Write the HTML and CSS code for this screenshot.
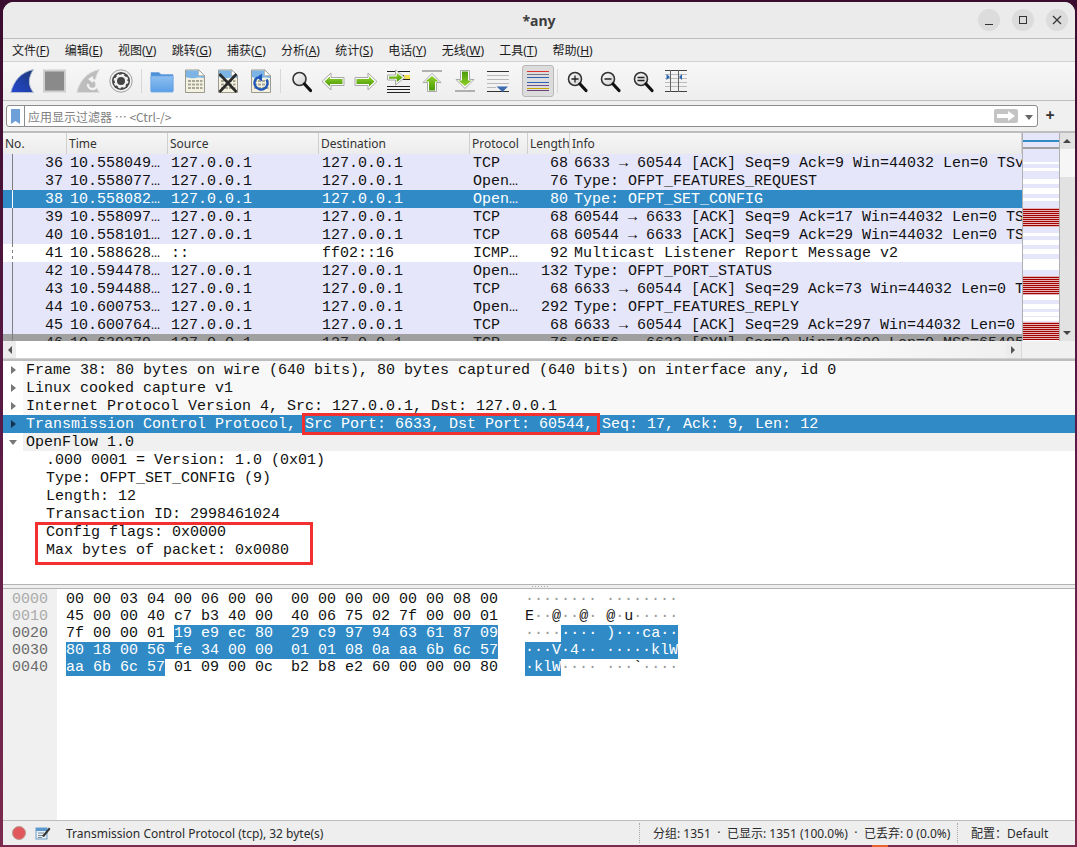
FILE: index.html
```html
<!DOCTYPE html>
<html lang="zh">
<head>
<meta charset="utf-8">
<title>*any</title>
<link rel="stylesheet" href="styles.css">
</head>
<body>
<svg class="defs" width="0" height="0" aria-hidden="true">
  <defs>
    <linearGradient id="blueFin" x1="0" y1="1" x2="1" y2="0"><stop offset="0" stop-color="#2446d0"/><stop offset=".6" stop-color="#1f3f9c"/><stop offset="1" stop-color="#1d3b70"/></linearGradient>
    <linearGradient id="green" x1="0" y1="0" x2="0" y2="1"><stop offset="0" stop-color="#8fd02a"/><stop offset="1" stop-color="#4a9a08"/></linearGradient>
    <linearGradient id="folder" x1="0" y1="0" x2="0" y2="1"><stop offset="0" stop-color="#8fc0f0"/><stop offset="1" stop-color="#5b9ee6"/></linearGradient>
    <linearGradient id="glass" x1="0" y1="0" x2="1" y2="1"><stop offset="0" stop-color="#fdfdfd"/><stop offset="1" stop-color="#cfcfcf"/></linearGradient>
    <pattern id="redStripe" width="4" height="2" patternUnits="userSpaceOnUse"><rect width="4" height="2" fill="#e6b4b4"/><rect width="4" height="1" fill="#a00000"/></pattern>
    <g id="arrowLeft">
      <path d="M1 12.500L10 4V8.500H23V16.500H10V21Z" fill="#fbfbfb" stroke="#a8a8a8"/>
      <path d="M3.500 12.500L9 7.500V10H21.500V15H9V17.500Z" fill="url(#green)"/>
    </g>
    <g id="arrowUp">
      <path d="M12 4.500L21 13.500H16.500V22.500H7.500V13.500H3Z" fill="#fbfbfb" stroke="#a8a8a8"/>
      <path d="M12 7L18.500 12.500H15V21.500H9V12.500H5.500Z" fill="url(#green)"/>
      <path d="M2 2H22" stroke="#9a9a9a" stroke-width="1.500"/>
    </g>
    <symbol id="page" viewBox="0 0 24 24">
      <path d="M2.500 1H16L21.500 6.500V23.500H2.500Z" fill="#f4f1e0" stroke="#9a9a8e"/>
      <path d="M3 1.500H15.500V7H21V9C15 7 9 11 3 8Z" fill="#7db4e6"/>
      <path d="M15.500 1V6.500H21.500Z" fill="#fff" stroke="#9a9a8e" stroke-width=".6"/>
      <g fill="#a8a898">
        <rect x="5" y="11" width="3" height="2"/><rect x="9" y="11" width="3" height="2"/><rect x="13" y="11" width="3" height="2"/><rect x="17" y="11" width="2.500" height="2"/>
        <rect x="5" y="14.500" width="3" height="2"/><rect x="9" y="14.500" width="3" height="2"/><rect x="13" y="14.500" width="3" height="2"/><rect x="17" y="14.500" width="2.500" height="2"/>
        <rect x="5" y="18" width="3" height="2"/><rect x="9" y="18" width="3" height="2"/><rect x="13" y="18" width="3" height="2"/><rect x="17" y="18" width="2.500" height="2"/>
      </g>
    </symbol>
    <g id="lens">
      <circle cx="10" cy="10" r="6.500" fill="url(#glass)" stroke="#333" stroke-width="1.600"/>
      <path d="M15 15L21 21.500" stroke="#111" stroke-width="3.200" stroke-linecap="round"/>
    </g>
  </defs>
</svg>

<div class="window">
  <header class="titlebar">
    <span class="title">*any</span>
    <div class="winctl">
      <button class="wbtn"><svg width="10" height="10" viewBox="0 0 10 10"><path d="M1 9.500H9" stroke="#333" stroke-width="1"/></svg></button>
      <button class="wbtn"><svg width="10" height="10" viewBox="0 0 10 10"><rect x="1.500" y="1.500" width="7" height="7" fill="none" stroke="#333" stroke-width="1"/></svg></button>
      <button class="wbtn"><svg width="10" height="10" viewBox="0 0 10 10"><path d="M1 1L9 9M9 1L1 9" stroke="#333" stroke-width="1.200"/></svg></button>
    </div>
  </header>

  <nav class="menubar">
    <span>文件(<u>F</u>)</span><span>编辑(<u>E</u>)</span><span>视图(<u>V</u>)</span><span>跳转(<u>G</u>)</span><span>捕获(<u>C</u>)</span><span>分析(<u>A</u>)</span><span>统计(<u>S</u>)</span><span>电话(<u>Y</u>)</span><span>无线(<u>W</u>)</span><span>工具(<u>T</u>)</span><span>帮助(<u>H</u>)</span>
  </nav>

  <div class="toolbar">
    <span class="tool"><svg viewBox="0 0 24 24"><path d="M.8 23.500C3.500 12 11 3 23.500 .5C18.500 8 17.500 16 23.500 23.500Z" fill="url(#blueFin)" stroke="#b4bfd4"/></svg></span>
    <span class="tool"><svg viewBox="0 0 24 24"><rect x="1" y="1.500" width="21" height="21" fill="#8a8a8a" stroke="#cfcfcf" stroke-width="2"/></svg></span>
    <span class="tool"><svg viewBox="0 0 24 24"><path d="M.8 23.500C3.500 12 11 3 23.500 .5C18.500 8 17.500 16 23.500 23.500Z" fill="#bdbdbd" stroke="#dcdcdc"/><path d="M17 11A4.500 4.500 0 1 1 12 15" fill="none" stroke="#f2f2f2" stroke-width="2.400"/><path d="M12 10L17 7V14Z" fill="#f2f2f2"/></svg></span>
    <span class="tool"><svg viewBox="0 0 24 24"><circle cx="12" cy="12" r="11.200" fill="#f0f0f0" stroke="#8c8c8c" stroke-width=".8"/><circle cx="12" cy="12" r="9" fill="#444"/><circle cx="12" cy="12" r="5.200" fill="none" stroke="#f2f2f2" stroke-width="2.400"/><circle cx="12" cy="12" r="6.500" fill="none" stroke="#f2f2f2" stroke-width="1.800" stroke-dasharray="2.500 2.600"/></svg></span>
    <i class="sep"></i>
    <span class="tool"><svg viewBox="0 0 24 24"><path d="M1 3.500H9L11 5.500H23V10H1Z" fill="#4b8fd9" stroke="#6ca0d8" stroke-width=".6"/><rect x=".8" y="7" width="22.400" height="16" rx="1" fill="url(#folder)" stroke="#6ca6e4" stroke-width=".8"/></svg></span>
    <span class="tool"><svg viewBox="0 0 24 24"><use href="#page"/></svg></span>
    <span class="tool"><svg viewBox="0 0 24 24"><use href="#page"/><path d="M3.500 5L20.500 23M20.500 5L3.500 23" stroke="#2b2b2b" stroke-width="2.600"/></svg></span>
    <span class="tool"><svg viewBox="0 0 24 24"><use href="#page"/><path d="M8.500 8.500A6.500 6.500 0 1 0 17.500 10.500" fill="none" stroke="#1f57b8" stroke-width="2.400"/><path d="M13 4.500L7.500 8.500L13 12.500Z" fill="#1f57b8"/></svg></span>
    <i class="sep sep-narrow"></i>
    <span class="tool"><svg viewBox="0 0 24 24"><use href="#lens" transform="translate(1.500 0)"/></svg></span>
    <span class="tool"><svg viewBox="0 0 24 24"><use href="#arrowLeft"/></svg></span>
    <span class="tool"><svg viewBox="0 0 24 24"><use href="#arrowLeft" transform="matrix(-1 0 0 1 24 0)"/></svg></span>
    <span class="tool"><svg viewBox="0 0 24 24"><path d="M0 2.500H23M15 6.500H23M15 10.500H23M0 17.500H23M0 20.500H23M0 23.500H23" stroke="#222" stroke-width="1"/><rect x="17" y="6" width="6" height="4" fill="#f5e050"/><path d="M.5 6H8.500V1L18 8.500L8.500 16V11H.5Z" fill="#fbfbfb" stroke="#a8a8a8"/><path d="M2 7.500H9.800V4L15.800 8.500L9.800 13V9.700H2Z" fill="url(#green)"/></svg></span>
    <span class="tool"><svg viewBox="0 0 24 24"><use href="#arrowUp"/></svg></span>
    <span class="tool"><svg viewBox="0 0 24 24"><use href="#arrowUp" transform="matrix(1 0 0 -1 0 24)"/></svg></span>
    <span class="tool"><svg viewBox="0 0 24 24"><path d="M1 2.500H23" stroke="#333"/><path d="M1 6.500H23M1 10.500H23M1 14.500H23M1 18.500H10" stroke="#b8b8b8"/><path d="M1 22.500H23" stroke="#333"/><path d="M16.500 23L10.500 17.500H22Z" fill="#3b6cb0"/></svg></span>
    <span class="tool tool-active"><svg viewBox="0 0 24 24"><path d="M1 2.500H23" stroke="#d33"/><path d="M1 5.500H23" stroke="#778"/><path d="M1 8.500H23" stroke="#2a62b8"/><path d="M1 13.500H23" stroke="#2a62b8"/><path d="M1 16.500H23" stroke="#705090"/><path d="M1 19.500H23" stroke="#c9a400"/><path d="M1 21.500H23" stroke="#664477"/></svg></span>
    <i class="sep sep-narrow"></i>
    <span class="tool"><svg viewBox="0 0 24 24"><use href="#lens"/><path d="M6.500 10H13.500M10 6.500V13.500" stroke="#222" stroke-width="1.300"/></svg></span>
    <span class="tool"><svg viewBox="0 0 24 24"><use href="#lens"/><path d="M6.500 10H13.500" stroke="#222" stroke-width="1.400"/></svg></span>
    <span class="tool"><svg viewBox="0 0 24 24"><use href="#lens"/><path d="M6.500 8.500H13.500M6.500 11.500H13.500" stroke="#222" stroke-width="1.300"/></svg></span>
    <span class="tool"><svg viewBox="0 0 24 24"><path d="M1 5.500H23M1 9.500H23M1 13.500H23M1 17.500H23" stroke="#bbb"/><path d="M1 1.500H23M1 22.500H23" stroke="#444"/><path d="M6.500 1V23M14.500 1V23" stroke="#666"/><path d="M2.500 5L6 8L2.500 11Z M18 5L15 8L18 11Z" fill="#2d66b0"/></svg></span>
  </div>

  <div class="filterbar">
    <div class="filter">
      <span class="bookmark"><svg width="9" height="15" viewBox="0 0 9 15"><path d="M0 0H9V15L4.500 12L0 15Z" fill="#6f9fd8"/></svg></span>
      <span class="placeholder">应用显示过滤器 ⋯ &lt;Ctrl-/&gt;</span>
      <span class="apply"><svg width="18" height="10" viewBox="0 0 18 10"><path d="M0 3H11V0L18 5L11 10V7H0Z" fill="#fff"/></svg></span>
      <span class="dropdown"></span>
    </div>
    <span class="plus">+</span>
  </div>

  <section class="packets">
    <div class="packets-main">
      <div class="cols head">
        <span>No.</span><span>Time</span><span>Source</span><span>Destination</span><span>Protocol</span><span>Length</span><span>Info</span>
      </div>
      <div class="cols row tcp"><span class="no">36</span><span>10.558049…</span><span>127.0.0.1</span><span>127.0.0.1</span><span>TCP</span><span class="len">68</span><span>6633 → 60544 [ACK] Seq=9 Ack=9 Win=44032 Len=0 TSval=2859232343</span></div>
      <div class="cols row tcp"><span class="no">37</span><span>10.558077…</span><span>127.0.0.1</span><span>127.0.0.1</span><span>Open…</span><span class="len">76</span><span>Type: OFPT_FEATURES_REQUEST</span></div>
      <div class="cols row sel"><span class="no">38</span><span>10.558082…</span><span>127.0.0.1</span><span>127.0.0.1</span><span>Open…</span><span class="len">80</span><span>Type: OFPT_SET_CONFIG</span></div>
      <div class="cols row tcp"><span class="no">39</span><span>10.558097…</span><span>127.0.0.1</span><span>127.0.0.1</span><span>TCP</span><span class="len">68</span><span>60544 → 6633 [ACK] Seq=9 Ack=17 Win=44032 Len=0 TSval=2859232343</span></div>
      <div class="cols row tcp"><span class="no">40</span><span>10.558101…</span><span>127.0.0.1</span><span>127.0.0.1</span><span>TCP</span><span class="len">68</span><span>60544 → 6633 [ACK] Seq=9 Ack=29 Win=44032 Len=0 TSval=2859232343</span></div>
      <div class="cols row plain"><span class="no">41</span><span>10.588628…</span><span>::</span><span>ff02::16</span><span>ICMP…</span><span class="len">92</span><span>Multicast Listener Report Message v2</span></div>
      <div class="cols row tcp"><span class="no">42</span><span>10.594478…</span><span>127.0.0.1</span><span>127.0.0.1</span><span>Open…</span><span class="len">132</span><span>Type: OFPT_PORT_STATUS</span></div>
      <div class="cols row tcp"><span class="no">43</span><span>10.594488…</span><span>127.0.0.1</span><span>127.0.0.1</span><span>TCP</span><span class="len">68</span><span>6633 → 60544 [ACK] Seq=29 Ack=73 Win=44032 Len=0 TSval=2859232379</span></div>
      <div class="cols row tcp"><span class="no">44</span><span>10.600753…</span><span>127.0.0.1</span><span>127.0.0.1</span><span>Open…</span><span class="len">292</span><span>Type: OFPT_FEATURES_REPLY</span></div>
      <div class="cols row tcp"><span class="no">45</span><span>10.600764…</span><span>127.0.0.1</span><span>127.0.0.1</span><span>TCP</span><span class="len">68</span><span>6633 → 60544 [ACK] Seq=29 Ack=297 Win=44032 Len=0 TSval=28</span></div>
      <div class="cols row syn"><span class="no">46</span><span>10.639279…</span><span>127.0.0.1</span><span>127.0.0.1</span><span>TCP</span><span class="len">76</span><span>60556 → 6633 [SYN] Seq=0 Win=43690 Len=0 MSS=65495</span></div>
    </div>
    <svg class="minimap" width="36" height="207" viewBox="0 0 36 207" shape-rendering="crispEdges">
      <rect width="36" height="207" fill="#e6e6fb"/>
      <rect y="7" width="36" height="2" fill="#2f8ac6"/>
      <rect y="14" width="36" height="2" fill="#a0a0a0"/>
      <g fill="#fff">
        <rect y="29" width="36" height="2"/><rect y="35" width="36" height="3"/><rect y="46" width="36" height="5"/><rect y="55" width="36" height="6"/><rect y="65" width="36" height="3"/>
        <rect y="100" width="36" height="3"/><rect y="107" width="36" height="5"/><rect y="116" width="36" height="5"/><rect y="126" width="36" height="11"/><rect y="162" width="36" height="5"/><rect y="171" width="36" height="5"/><rect y="179" width="36" height="4"/><rect y="184" width="36" height="4"/>
      </g>
      <g fill="url(#redStripe)">
        <rect y="75" width="36" height="19"/><rect y="143" width="36" height="19"/><rect y="189" width="36" height="18"/>
      </g>
    </svg>
    <div class="vscroll">
      <span class="arrow-up"></span>
      <span class="vthumb"></span>
      <span class="arrow-down"></span>
    </div>
  </section>

  <div class="hscroll">
    <span class="hleft"></span>
    <span class="htrack"></span>
    <span class="hright"></span>
    <span class="hcorner"></span>
  </div>

  <div class="splitter"><span class="grip"></span></div>

  <section class="details">
    <div class="line line-top"><i class="tw"></i>Frame 38: 80 bytes on wire (640 bits), 80 bytes captured (640 bits) on interface any, id 0</div>
    <div class="line line-top"><i class="tw"></i>Linux cooked capture v1</div>
    <div class="line line-top"><i class="tw"></i>Internet Protocol Version 4, Src: 127.0.0.1, Dst: 127.0.0.1</div>
    <div class="line line-sel"><i class="tw tw-dark"></i>Transmission Control Protocol, Src Port: 6633, Dst Port: 60544, Seq: 17, Ack: 9, Len: 12</div>
    <div class="line line-open"><i class="tw tw-down"></i>OpenFlow 1.0</div>
    <div class="line child">.000 0001 = Version: 1.0 (0x01)</div>
    <div class="line child">Type: OFPT_SET_CONFIG (9)</div>
    <div class="line child">Length: 12</div>
    <div class="line child">Transaction ID: 2998461024</div>
    <div class="line child">Config flags: 0x0000</div>
    <div class="line child">Max bytes of packet: 0x0080</div>
    <span class="mark mark-port"></span>
    <span class="mark mark-config"></span>
  </section>

  <div class="splitter splitter-hex"><span class="grip"></span></div>

  <section class="hex">
    <pre class="offsets"><span class="off-dim">0000</span>
<span class="off-dim">0010</span>
0020
0030
0040</pre>
    <pre class="bytes">00 00 03 04 00 06 00 00  00 00 00 00 00 00 08 00   <b>········ ········</b>
45 00 00 40 c7 b3 40 00  40 06 75 02 7f 00 00 01   E<b>··</b>@<b>··</b>@<b>·</b> @<b>·</b>u<b>·····</b>
7f 00 00 01 <mark>19 e9 ec 80  29 c9 97 94 63 61 87 09</mark>   <b>····</b><mark>···· )···ca··</mark>
<mark>80 18 00 56 fe 34 00 00  01 01 08 0a aa 6b 6c 57</mark>   <mark>···V·4·· ·····klW</mark>
<mark>aa 6b 6c 57</mark> 01 09 00 0c  b2 b8 e2 60 00 00 00 80   <mark>·klW</mark><b>····</b> <b>···</b>`<b>····</b></pre>
  </section>

  <footer class="status">
    <span class="led"></span>
    <svg class="note" width="16" height="14" viewBox="0 0 16 14"><rect x="1" y="2" width="11" height="11" fill="#e8f0f6" stroke="#6a9cc8"/><path d="M1 2H12V5H1Z" fill="#5a98d0"/><path d="M3 7H9M3 9.500H8M3 11.500H7" stroke="#7a8a96"/><path d="M7 10L14 1.500L15.500 3L9 11Z" fill="#333"/></svg>
    <span class="st-text">Transmission Control Protocol (tcp), 32 byte(s)</span>
    <span class="st-grip"></span>
    <span class="st-count"><span>分组: 1351</span><span>·</span><span>已显示: 1351 (100.0%)</span><span>·</span><span>已丢弃: 0 (0.0%)</span></span>
    <span class="st-grip st-grip-2"></span>
    <span class="st-prof">配置：Default</span>
  </footer>
</div>
<span class="wallpaper-spot"></span>
</body>
</html>
```
FILE: styles.css
```css
* { box-sizing: border-box; }
html, body { height: 100%; }
body {
  margin: 0;
  padding: 2px 2px 2px 3px;
  background: linear-gradient(180deg, #3a0c2e 0%, #5a1a46 50%, #7c2a4e 100%);
  overflow: hidden;
  font-family: "Noto Sans", "Noto Sans CJK SC", sans-serif;
  font-size: 12px;
  color: #222;
}
.defs { position: absolute; }
.window {
  height: 843px;
  display: flex;
  flex-direction: column;
  background: #f0f0f0;
  border-radius: 11px 11px 0 0;
  overflow: hidden;
}

/* title bar */
.titlebar {
  height: 37px;
  flex: none;
  display: flex;
  align-items: center;
  justify-content: center;
  position: relative;
  background: #ebebeb;
  border-bottom: 1px solid #bdbdbd;
}
.title { font-size: 14px; font-weight: 700; color: #3d3d3d; }
.winctl {
  position: absolute;
  right: 7px;
  top: 7px;
  display: flex;
  gap: 12px;
}
.wbtn {
  width: 22px;
  height: 22px;
  padding: 0;
  border: 0;
  border-radius: 50%;
  background: #dcdcdc;
  display: flex;
  align-items: center;
  justify-content: center;
}

/* menu */
.menubar {
  height: 23px;
  flex: none;
  display: flex;
  align-items: center;
  gap: 15.300px;
  padding: 0 0 0 9px;
  background: #eeeeee;
  border-bottom: 1px solid #d0d0d0;
  font-family: "Noto Sans", "Noto Sans CJK SC", sans-serif;
  font-size: 12px;
  color: #1c1c1c;
}
.menubar span { white-space: nowrap; }

/* toolbar */
.toolbar {
  height: 39px;
  flex: none;
  display: flex;
  align-items: center;
  padding-left: 2px;
  background: linear-gradient(180deg, #f7f7f7, #eeeeee);
  border-bottom: 1px solid #bdbdbd;
}
.tool {
  width: 33px;
  height: 32px;
  flex: none;
  display: flex;
  align-items: center;
  justify-content: center;
}
.tool svg { width: 24px; height: 24px; display: block; }
.tool-active {
  width: 32px;
  margin-left: 8px;
  background: #dcdcdc;
  border: 1px solid #b8b8b8;
  border-radius: 3px;
}
.sep { width: 1px; height: 24px; flex: none; margin: 0 3.500px; background: #d8d8d8; }
.sep-narrow { margin: 0 2.500px; }

/* filter */
.filterbar {
  height: 32px;
  flex: none;
  display: flex;
  align-items: flex-start;
  padding: 4px 0 0 3px;
  background: #f0f0f0;
  border-bottom: 2px solid #bdbdbd;
}
.filter {
  width: 1032px;
  height: 22px;
  display: flex;
  align-items: center;
  background: #fff;
  border: 1px solid #8c8c8c;
  border-radius: 3px;
}
.bookmark {
  width: 18px;
  height: 20px;
  flex: none;
  display: flex;
  align-items: center;
  justify-content: center;
  border-right: 1px solid #8c8c8c;
}
.placeholder {
  flex: 1;
  padding-left: 3px;
  color: #808080;
  font-family: "Noto Sans CJK SC", "Noto Sans", sans-serif;
  font-size: 12px;
}
.apply {
  width: 24px;
  height: 14px;
  display: flex;
  align-items: center;
  justify-content: center;
  border-radius: 2px;
  background: #c4c4c4;
}
.dropdown {
  width: 0;
  height: 0;
  margin: 2px 4px 0 7px;
  border: 4px solid transparent;
  border-top: 5px solid #666;
  border-bottom: 0;
}
.plus { width: 24px; text-align: center; font-size: 16px; line-height: 20px; font-weight: 700; color: #333; }

/* packet list */
.packets {
  height: 208px;
  flex: none;
  display: flex;
  background: #fff;
}
.packets-main {
  width: 1020px;
  flex: none;
  overflow: hidden;
  border-right: 1px solid #b0b0b0;
}
.cols {
  display: grid;
  grid-template-columns: 64px 101px 151px 151px 58px 42px 452px;
}
.cols span { overflow: hidden; white-space: nowrap; padding-left: 3px; }
.head {
  height: 21px;
  line-height: 21px;
  font-size: 12px;
  background: linear-gradient(180deg, #f6f6f6, #ececec);
  color: #333;
}
.head span { border-right: 1px solid #cfcfcf; padding-left: 2px; }
.row {
  height: 18px;
  line-height: 20px;
  font-family: "Liberation Mono", monospace;
  font-size: 15px;
  color: #111;
  position: relative;
}
.row span:last-child { padding-left: 4px; }
.head span:last-child { padding-left: 2px; }
.row::before {
  content: "";
  position: absolute;
  left: 9px;
  top: 0;
  bottom: 0;
  width: 1px;
  background: #808080;
}
.no { text-align: right; padding-right: 4px; }
.len { text-align: right; padding-right: 2px; }
.tcp { background: #e6e6fb; }
.plain { background: #fff; }
.plain::before { background: repeating-linear-gradient(180deg, #808080 0 3px, transparent 3px 6px); }
.sel { background: #2f8ac6; color: #fff; }
.sel::before { background: #fff; }
.syn { background: #a0a0a0; color: #222; }
.minimap { flex: none; display: block; border-right: 0; }
.vscroll {
  flex: 1;
  display: flex;
  flex-direction: column;
  background: #e2e2e2;
  border-left: 1px solid #b0b0b0;
  position: relative;
}
.arrow-up, .arrow-down {
  position: absolute;
  left: 3px;
  width: 0;
  height: 0;
  border: 4px solid transparent;
}
.arrow-up { top: 2px; border-bottom: 4px solid #444; }
.arrow-down { bottom: 2px; border-top: 4px solid #444; }
.vthumb { margin-top: 16px; height: 28px; background: #f6f6f6; }

.hscroll {
  height: 18px;
  flex: none;
  display: flex;
  align-items: stretch;
  background: #f0f0f0;
  border-bottom: 1px solid #d0d0d0;
}
.hleft { width: 13px; position: relative; background: #ececec; }
.hleft::after, .hright::after {
  content: "";
  position: absolute;
  top: 5px;
  border: 4px solid transparent;
}
.hleft::after { left: 1px; border-right: 4px solid #555; }
.hright::after { left: 5px; border-left: 4px solid #555; }
.htrack { width: 990px; background: linear-gradient(90deg, #fff 0, #fff 70%, #f0f0f0 100%); }
.hright { width: 16px; position: relative; background: #ececec; border-right: 1px solid #d8d8d8; }
.hcorner { flex: 1; background: #f0f0f0; }

.splitter {
  height: 2px;
  flex: none;
  position: relative;
  background: #bdbdbd;
}
.grip { display: none; }
.splitter-hex {
  height: 5px;
  background: #efefef;
  border-top: 1px solid #b4b4b4;
  border-bottom: 1px solid #b4b4b4;
}
.splitter-hex .grip {
  display: block;
  position: absolute;
  left: 529px;
  top: 1px;
  width: 16px;
  height: 1px;
  background: repeating-linear-gradient(90deg, #aaa 0 1px, transparent 1px 3px);
}

/* details */
.details {
  height: 223px;
  flex: none;
  background: #fff;
  position: relative;
  font-family: "Liberation Mono", monospace;
  font-size: 15px;
  color: #111;
}
.line {
  height: 18px;
  line-height: 20px;
  padding-left: 23px;
  white-space: pre;
  position: relative;
}
.child { padding-left: 43px; }
.line-sel { background: #2f8ac6; color: #fff; }
.line-top { background: linear-gradient(90deg, #fff 20px, #f8f8f8 20px); }
.line-open { background: linear-gradient(90deg, #fff 20px, #f0f0f0 20px); }
.tw {
  position: absolute;
  left: 8px;
  top: 5px;
  width: 0;
  height: 0;
  border: 4px solid transparent;
  border-left: 5px solid #777;
  border-right: 0;
}
.tw-dark { border-left-color: #16324f; }
.tw-down {
  left: 6px;
  top: 7px;
  border: 4px solid transparent;
  border-top: 5px solid #777;
  border-bottom: 0;
}
.mark { position: absolute; border: 3px solid #f23030; pointer-events: none; }
.mark-port { left: 299px; top: 52px; width: 298px; height: 22px; }
.mark-config { left: 32px; top: 161px; width: 278px; height: 43px; }

/* hex */
.hex {
  flex: 1;
  display: flex;
  background: #fff;
  font-family: "Liberation Mono", monospace;
  font-size: 15px;
  line-height: 17px;
  color: #111;
}
.hex pre { margin: 0; font: inherit; padding-top: 2px; }
.offsets {
  width: 54px;
  flex: none;
  padding-left: 9px;
  background: #f0f0f0;
  color: #6a6a6a;
}
.off-dim { color: #aaa; }
.bytes { padding-left: 9px; }
.bytes b { font-weight: 400; color: #999; }
.bytes mark { background: #2f8ac6; color: #fff; }

/* status */
.status {
  height: 25px;
  flex: none;
  display: flex;
  align-items: center;
  position: relative;
  background: #eeeeee;
  border-top: 1px solid #bdbdbd;
  font-size: 12px;
  color: #2b2b2b;
}
.led {
  width: 14px;
  height: 14px;
  margin-left: 9px;
  border-radius: 50%;
  background: #e0585c;
  border: 1px solid #b98;
}
.note { margin-left: 9px; }
.st-text { margin-left: 15px; width: 573px; flex: none; }
.st-grip { width: 1px; height: 20px; flex: none; border-left: 1px dotted #aaa; }
.st-count {
  margin-left: 13px;
  width: 304px;
  flex: none;
  display: flex;
  gap: 6.500px;
  white-space: nowrap;
}
.st-prof { margin-left: 13px; white-space: nowrap; }
.wallpaper-spot {
  position: absolute;
  left: 872px;
  top: 845px;
  width: 16px;
  height: 2px;
  background: #e8642c;
}
```
